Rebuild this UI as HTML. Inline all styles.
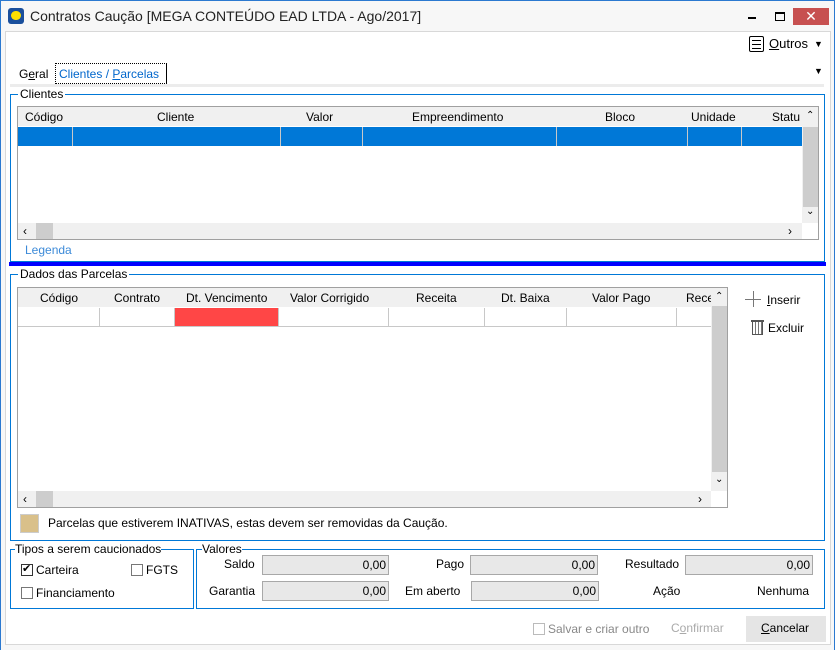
<!DOCTYPE html>
<html><head><meta charset="utf-8"><style>
*{box-sizing:border-box;margin:0;padding:0}
body{width:835px;height:650px;background:#f7f7f7;font-family:"Liberation Sans","DejaVu Sans",sans-serif;font-size:12px;color:#000;position:relative;overflow:hidden}
.a{position:absolute}
.t{position:absolute;white-space:nowrap;line-height:14px}
.grp{position:absolute;border:1px solid #0078d7}
.lg{position:absolute;background:#fff;padding:0 2px;line-height:12px;top:-7px}
.grid{position:absolute;border:1px solid #a0a0a0;background:#fff;overflow:hidden}
.hd{position:absolute;top:0;height:19px;background:#f0f0f0;left:0}
.vl{position:absolute;width:1px;background:#c8c8c8}
.inp{position:absolute;background:#e8e8e8;border:1px solid #a8a8a8;text-align:right;padding-right:2px;line-height:18px;height:20px}
.cb{position:absolute;width:12px;height:12px;border:1px solid #333;background:#fff}
</style></head><body>
<div class="a" style="left:0;top:0;width:835px;height:650px;border:1px solid #2b79d0;border-bottom:none;background:#f7f7f7"></div>
<div class="a" style="left:8px;top:8px;width:16px;height:16px;background:#1a4f9c;border-radius:3px"></div>
<div class="a" style="left:11px;top:11px;width:10px;height:9px;background:#ffe000;border-radius:5px"></div>
<div class="t" style="left:30px;top:9px;font-size:14px;color:#222">Contratos Caução [MEGA CONTEÚDO EAD LTDA - Ago/2017]</div>
<div class="a" style="left:748px;top:17px;width:8px;height:2px;background:#000"></div>
<div class="a" style="left:775px;top:12px;width:10px;height:9px;border:1px solid #000;border-top-width:2px"></div>
<div class="a" style="left:793px;top:8px;width:36px;height:17px;background:#c75050;color:#fff;text-align:center;font-size:14px;line-height:17px;font-weight:bold">✕</div>

<div class="a" style="left:5px;top:31px;width:826px;height:614px;background:#fff;border:1px solid #d8d8d8"></div>
<div class="a" style="left:749px;top:36px;width:15px;height:16px;border:1px solid #000;border-radius:2px"></div>
<div class="a" style="left:752px;top:40px;width:9px;height:1px;border-top:1px solid #000"></div>
<div class="a" style="left:752px;top:44px;width:9px;height:1px;border-top:1px solid #000"></div>
<div class="a" style="left:752px;top:48px;width:9px;height:1px;border-top:1px solid #000"></div>
<div class="t" style="left:769px;top:37px;font-size:13px"><u>O</u>utros</div>
<div class="t" style="left:814px;top:37px;font-size:9px">▼</div>
<div class="t" style="left:814px;top:64px;font-size:9px">▼</div>
<div class="t" style="left:19px;top:67px">G<u>e</u>ral</div>
<div class="a" style="left:55px;top:63px;width:112px;height:21px;border:1px dotted #000;border-right:1px solid #000"></div>
<div class="t" style="left:59px;top:67px;color:#0066cc">Clientes / <u>P</u>arcelas</div>
<div class="a" style="left:10px;top:84px;width:814px;height:3px;background:#ececec"></div>

<div class="grp" style="left:10px;top:94px;width:815px;height:168px"><div class="lg" style="left:7px">Clientes</div></div>
<div class="grid" style="left:17px;top:106px;width:802px;height:134px">
 <div class="hd" style="width:784px"></div>
 <div class="a" style="left:0;top:20px;width:784px;height:19px;background:#0078d7"></div>
 <div class="vl" style="left:54px;top:20px;height:19px"></div><div class="vl" style="left:262px;top:20px;height:19px"></div><div class="vl" style="left:344px;top:20px;height:19px"></div><div class="vl" style="left:538px;top:20px;height:19px"></div><div class="vl" style="left:669px;top:20px;height:19px"></div><div class="vl" style="left:723px;top:20px;height:19px"></div>
 <div class="t" style="left:7px;top:3px">Código</div><div class="t" style="left:139px;top:3px">Cliente</div><div class="t" style="left:288px;top:3px">Valor</div><div class="t" style="left:394px;top:3px">Empreendimento</div><div class="t" style="left:587px;top:3px">Bloco</div><div class="t" style="left:673px;top:3px">Unidade</div><div class="t" style="left:754px;top:3px">Statu</div>
 <div class="a" style="left:784px;top:0;width:17px;height:116px;background:#f0f0f0"></div>
 <div class="a" style="left:785px;top:20px;width:15px;height:80px;background:#cdcdcd"></div>
 <div class="t" style="left:788px;top:2px;font-size:10px">⌃</div><div class="t" style="left:788px;top:98px;font-size:10px">⌄</div>
 <div class="a" style="left:0;top:116px;width:784px;height:17px;background:#f0f0f0"></div>
 <div class="a" style="left:18px;top:116px;width:17px;height:17px;background:#cdcdcd"></div>
 <div class="t" style="left:5px;top:117px">‹</div><div class="t" style="left:770px;top:117px">›</div>
</div>
<div class="t" style="left:25px;top:243px;color:#3c8ad8">Legenda</div>
<div class="a" style="left:9px;top:262px;width:817px;height:4px;background:#0000ff"></div>

<div class="grp" style="left:10px;top:274px;width:815px;height:267px"><div class="lg" style="left:7px">Dados das Parcelas</div></div>
<div class="grid" style="left:17px;top:287px;width:711px;height:221px">
 <div class="hd" style="width:693px"></div>
 <div class="a" style="left:157px;top:20px;width:103px;height:19px;background:#ff4646"></div>
 <div class="a" style="left:0;top:38px;width:693px;height:1px;background:#c8c8c8"></div>
 <div class="vl" style="left:81px;top:20px;height:19px"></div><div class="vl" style="left:156px;top:20px;height:19px"></div><div class="vl" style="left:260px;top:20px;height:19px"></div><div class="vl" style="left:370px;top:20px;height:19px"></div><div class="vl" style="left:466px;top:20px;height:19px"></div><div class="vl" style="left:548px;top:20px;height:19px"></div><div class="vl" style="left:658px;top:20px;height:19px"></div>
 <div class="t" style="left:22px;top:3px">Código</div><div class="t" style="left:96px;top:3px">Contrato</div><div class="t" style="left:168px;top:3px">Dt. Vencimento</div><div class="t" style="left:272px;top:3px">Valor Corrigido</div><div class="t" style="left:398px;top:3px">Receita</div><div class="t" style="left:483px;top:3px">Dt. Baixa</div><div class="t" style="left:574px;top:3px">Valor Pago</div><div class="t" style="left:668px;top:3px">Rece</div>
 <div class="a" style="left:693px;top:0;width:17px;height:203px;background:#f0f0f0"></div>
 <div class="a" style="left:694px;top:18px;width:15px;height:166px;background:#cdcdcd"></div>
 <div class="t" style="left:697px;top:2px;font-size:10px">⌃</div><div class="t" style="left:697px;top:185px;font-size:10px">⌄</div>
 <div class="a" style="left:0;top:203px;width:693px;height:17px;background:#f0f0f0"></div>
 <div class="a" style="left:18px;top:203px;width:17px;height:17px;background:#cdcdcd"></div>
 <div class="t" style="left:5px;top:204px">‹</div><div class="t" style="left:680px;top:204px">›</div>
</div>
<div class="a" style="left:745px;top:299px;width:16px;height:1px;background:#777"></div>
<div class="a" style="left:753px;top:291px;width:1px;height:16px;background:#777"></div>
<div class="t" style="left:767px;top:293px"><u>I</u>nserir</div>
<div class="a" style="left:751px;top:320px;width:13px;height:2px;background:#555"></div>
<div class="a" style="left:752px;top:322px;width:11px;height:13px;border:1px solid #555;border-top:none;background:repeating-linear-gradient(90deg,#fff 0 2px,#777 2px 3px)"></div>
<div class="t" style="left:768px;top:321px">Excluir</div>
<div class="a" style="left:20px;top:514px;width:19px;height:19px;background:#d9c08a;border:1px solid #ccc"></div>
<div class="t" style="left:48px;top:516px">Parcelas que estiverem INATIVAS, estas devem ser removidas da Caução.</div>

<div class="grp" style="left:10px;top:549px;width:184px;height:60px"><div class="lg" style="left:4px;padding:0">Tipos a serem caucionados</div></div>
<div class="cb" style="left:21px;top:564px"></div><div class="t" style="left:22px;top:562px;font-size:11px">✔</div>
<div class="t" style="left:36px;top:563px">Carteira</div>
<div class="cb" style="left:131px;top:564px;border-color:#777"></div><div class="t" style="left:146px;top:563px">FGTS</div>
<div class="cb" style="left:21px;top:587px;border-color:#777"></div><div class="t" style="left:36px;top:586px">Financiamento</div>

<div class="grp" style="left:196px;top:549px;width:629px;height:60px"><div class="lg" style="left:5px;padding:0">Valores</div></div>
<div class="t" style="left:224px;top:557px">Saldo</div><div class="inp" style="left:262px;top:555px;width:127px">0,00</div>
<div class="t" style="left:209px;top:584px">Garantia</div><div class="inp" style="left:262px;top:581px;width:127px">0,00</div>
<div class="t" style="left:436px;top:557px">Pago</div><div class="inp" style="left:470px;top:555px;width:128px">0,00</div>
<div class="t" style="left:405px;top:584px">Em aberto</div><div class="inp" style="left:471px;top:581px;width:128px">0,00</div>
<div class="t" style="left:625px;top:557px">Resultado</div><div class="inp" style="left:685px;top:555px;width:128px">0,00</div>
<div class="t" style="left:653px;top:584px">Ação</div><div class="t" style="left:757px;top:584px">Nenhuma</div>

<div class="cb" style="left:533px;top:623px;border-color:#bbb"></div>
<div class="t" style="left:548px;top:622px;color:#888">Salvar e criar outro</div>
<div class="t" style="left:671px;top:621px;color:#aaa">C<u>o</u>nfirmar</div>
<div class="a" style="left:746px;top:616px;width:80px;height:26px;background:#e5e5e5"></div>
<div class="t" style="left:761px;top:621px"><u>C</u>ancelar</div>
</body></html>
